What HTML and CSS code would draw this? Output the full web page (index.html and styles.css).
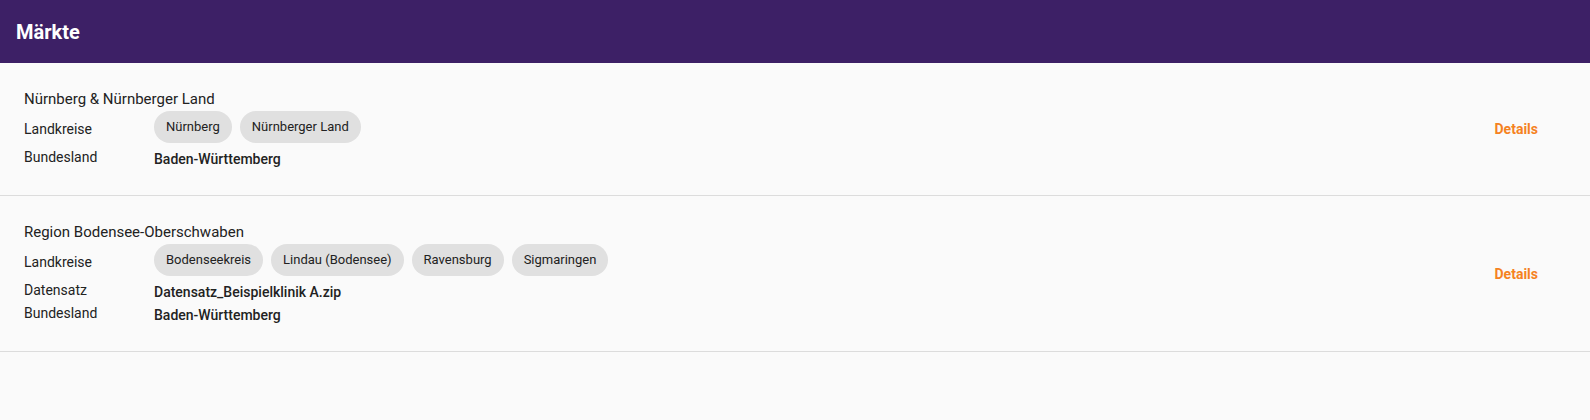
FILE: index.html
```html
<!DOCTYPE html>
<html lang="de">
<head>
  <meta charset="UTF-8">
  <title>Märkte</title>
  <link rel="stylesheet" href="styles.css">
</head>
<body>

  <header class="topbar">
    <h1>Märkte</h1>
  </header>

  <ul class="markets">
    <li class="market">
      <div class="market-info">
        <div class="market-name">Nürnberg &amp; Nürnberger Land</div>
        <div class="field field-chips">
          <span class="label">Landkreise</span>
          <div class="chips">
            <span class="chip">Nürnberg</span>
            <span class="chip">Nürnberger Land</span>
          </div>
        </div>
        <div class="field">
          <span class="label">Bundesland</span>
          <span class="value">Baden-Württemberg</span>
        </div>
      </div>
      <a class="details" href="#">Details</a>
    </li>
    <li class="market">
      <div class="market-info">
        <div class="market-name">Region Bodensee-Oberschwaben</div>
        <div class="field field-chips">
          <span class="label">Landkreise</span>
          <div class="chips">
            <span class="chip">Bodenseekreis</span>
            <span class="chip">Lindau (Bodensee)</span>
            <span class="chip">Ravensburg</span>
            <span class="chip">Sigmaringen</span>
          </div>
        </div>
        <div class="field">
          <span class="label">Datensatz</span>
          <span class="value">Datensatz_Beispielklinik A.zip</span>
        </div>
        <div class="field">
          <span class="label">Bundesland</span>
          <span class="value">Baden-Württemberg</span>
        </div>
      </div>
      <a class="details" href="#">Details</a>
    </li>
  </ul>

</body>
</html>
```

FILE: styles.css
```css
body {
  margin: 0;
  font-family: Roboto, Arial, sans-serif;
  font-size: 14px;
  line-height: 20px;
  color: #222;
  background: #fafafa;
}
.topbar {
  background: #3d2066;
  height: 63px;
  display: flex;
  align-items: center;
  padding: 0 16px;
}
.topbar h1 {
  margin: 0;
  color: #fff;
  font-size: 20px;
  font-weight: 700;
}
.markets {
  list-style: none;
  margin: 0;
  padding: 0;
}
.market {
  display: flex;
  align-items: center;
  padding: 26px 52px 26px 24px;
  border-bottom: 1px solid #dcdcdc;
}
.market-info {
  flex: 1;
  display: flex;
  flex-direction: column;
  gap: 1px;
}
.market-name {
  font-size: 15px;
}
.field {
  display: flex;
  align-items: flex-start;
}
.field-chips {
  margin: 1px 0 3px;
}
.label {
  width: 130px;
  flex-shrink: 0;
}
.field-chips .label {
  padding-top: 8px;
}
.value {
  font-weight: 500;
  padding-top: 2px;
}
.chips {
  display: flex;
  gap: 8px;
}
.chip {
  background: #e0e0e0;
  border-radius: 16px;
  height: 32px;
  line-height: 32px;
  padding: 0 12px;
  font-size: 13px;
  color: #222;
}
.details {
  color: #f5821f;
  font-weight: 700;
  text-decoration: none;
}
```
